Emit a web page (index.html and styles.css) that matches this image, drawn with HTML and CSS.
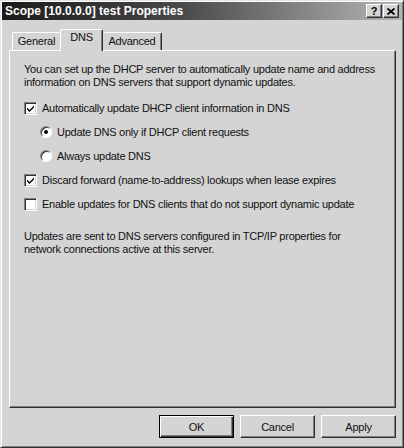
FILE: index.html
```html
<!DOCTYPE html>
<html lang="en">

<head>
  <meta charset="utf-8" />
  <title>Scope [10.0.0.0] test Properties</title>
  <link rel="stylesheet" href="styles.css">
</head>

<body>
  <div class="dialog">
    <!-- Title Bar -->
    <div class="titlebar">
      <span class="title">Scope [10.0.0.0] test Properties</span>
      <div class="caption-buttons">
        <button class="cap-btn help">?</button>
        <button class="cap-btn close">
          <svg width="8" height="7" viewBox="0 0 8 7">
            <path d="M0.5 0.5 L7.5 6.5 M7.5 0.5 L0.5 6.5" stroke="#000" stroke-width="1.8" />
          </svg>
        </button>
      </div>
    </div>

    <div class="content">
      <!-- Tabs -->
      <div class="tabs">
        <div class="tab tab-general">General</div>
        <div class="tab tab-dns active">DNS</div>
        <div class="tab tab-advanced">Advanced</div>
      </div>

      <!-- DNS Page -->
      <div class="panel">
        <p class="note">You can set up the DHCP server to automatically update name and address information on DNS servers that support dynamic updates.</p>

        <div class="options">
          <div class="option">
            <span class="check checked">
              <svg width="7" height="7" viewBox="0 0 7 7">
                <path d="M0 2.5 L2.5 5 L7 0.5 L7 2.5 L2.5 7 L0 4.5 Z" fill="#000" />
              </svg>
            </span>
            Automatically update DHCP client information in DNS
          </div>
          <div class="option sub">
            <span class="radio selected"></span>
            Update DNS only if DHCP client requests
          </div>
          <div class="option sub">
            <span class="radio"></span>
            Always update DNS
          </div>
          <div class="option">
            <span class="check checked">
              <svg width="7" height="7" viewBox="0 0 7 7">
                <path d="M0 2.5 L2.5 5 L7 0.5 L7 2.5 L2.5 7 L0 4.5 Z" fill="#000" />
              </svg>
            </span>
            Discard forward (name-to-address) lookups when lease expires
          </div>
          <div class="option">
            <span class="check"></span>
            Enable updates for DNS clients that do not support dynamic update
          </div>
        </div>

        <p class="note bottom">Updates are sent to DNS servers configured in TCP/IP properties for network connections active at this server.</p>
      </div>

      <!-- Dialog Buttons -->
      <div class="actions">
        <button class="btn default">OK</button>
        <button class="btn">Cancel</button>
        <button class="btn">Apply</button>
      </div>
    </div>
  </div>
</body>

</html>
```

FILE: styles.css
```css
/* Global Reset */
* {
  margin: 0;
  padding: 0;
  box-sizing: border-box;
}

body {
  font-family: 'Liberation Sans', Arial, sans-serif;
  font-size: 11px;
  letter-spacing: -0.25px;
  color: #111;
  background-color: #d4d4d4;
}

/* Window Frame */
.dialog {
  width: 404px;
  height: 448px;
  background-color: #d4d4d4;
  border-top: 1px solid #e4e4e4;
  border-left: 1px solid #e4e4e4;
  border-right: 1px solid #303030;
  border-bottom: 1px solid #303030;
  box-shadow: inset 1px 1px 0 #ffffff, inset -1px -1px 0 #808080;
  padding: 1px;
}

/* Title Bar */
.titlebar {
  height: 18px;
  display: flex;
  align-items: center;
  justify-content: space-between;
  padding: 0 3px 0 3px;
  background: linear-gradient(to right, #1a1a1a 0%, #4a4a4a 45%, #b6b6b6 100%);
}

.title {
  color: #fff;
  font-weight: 700;
  font-size: 12px;
  letter-spacing: 0;
}

.caption-buttons {
  display: flex;
}

.cap-btn {
  width: 16px;
  height: 14px;
  background-color: #d4d4d4;
  border: 1px solid;
  border-color: #ffffff #303030 #303030 #ffffff;
  box-shadow: inset -1px -1px 0 #808080;
  font-family: 'Liberation Sans', sans-serif;
  font-weight: 700;
  font-size: 11px;
  line-height: 11px;
  color: #000;
  display: flex;
  align-items: center;
  justify-content: center;
}

.cap-btn.help {
  margin-right: 1px;
}

/* Content */
.content {
  padding: 9px 6px 0 7px;
}

.tabs {
  display: flex;
  align-items: flex-end;
  height: 21px;
  padding-left: 3px;
  position: relative;
  z-index: 1;
}

.tab {
  height: 18px;
  background-color: #d4d4d4;
  border-top: 1px solid #ffffff;
  border-left: 1px solid #ffffff;
  border-right: 1px solid #303030;
  border-radius: 2px 2px 0 0;
  box-shadow: inset -1px 0 0 #808080;
  text-align: center;
  padding-top: 2px;
}

.tab-general {
  width: 48px;
  border-right: none;
  box-shadow: none;
}

.tab-dns {
  width: 43px;
}

.tab-advanced {
  width: 59px;
  border-left: none;
}

.tab.active {
  height: 22px;
  margin-bottom: -1px;
  padding-top: 1px;
}

.panel {
  height: 358px;
  border-top: 1px solid #ffffff;
  border-left: 1px solid #ffffff;
  border-right: 1px solid #303030;
  border-bottom: 1px solid #303030;
  box-shadow: inset -1px -1px 0 #808080;
  padding: 12px 8px 0 14px;
}

.note {
  line-height: 13px;
}

.options {
  margin-top: 7px;
}

.option {
  height: 24px;
  display: flex;
  align-items: center;
  gap: 5px;
}

.option.sub {
  padding-left: 16px;
}

.check {
  width: 13px;
  height: 13px;
  background-color: #fff;
  border-top: 1px solid #808080;
  border-left: 1px solid #808080;
  border-right: 1px solid #fff;
  border-bottom: 1px solid #fff;
  box-shadow: inset 1px 1px 0 #303030, inset -1px -1px 0 #d4d4d4;
  display: flex;
  align-items: center;
  justify-content: center;
  flex-shrink: 0;
}

.radio {
  width: 12px;
  height: 12px;
  border-radius: 50%;
  background-color: #fff;
  border: 1px solid;
  border-color: #808080 #fff #fff #808080;
  box-shadow: inset 1px 1px 0 #303030;
  display: flex;
  align-items: center;
  justify-content: center;
  flex-shrink: 0;
}

.radio.selected::after {
  content: "";
  width: 4px;
  height: 4px;
  border-radius: 50%;
  background-color: #000;
}

.note.bottom {
  margin-top: 14px;
  max-width: 330px;
}

/* Dialog Buttons */
.actions {
  display: flex;
  justify-content: flex-end;
  gap: 6px;
  margin-top: 7px;
}

.btn {
  width: 75px;
  height: 23px;
  background-color: #d4d4d4;
  font-family: 'Liberation Sans', sans-serif;
  font-size: 11px;
  letter-spacing: -0.25px;
  color: #111;
  border: 1px solid;
  border-color: #ffffff #303030 #303030 #ffffff;
  box-shadow: inset -1px -1px 0 #808080;
}

.btn.default {
  border: 1px solid #000;
  box-shadow: inset 1px 1px 0 #ffffff, inset -1px -1px 0 #303030, inset -2px -2px 0 #808080;
}
```
